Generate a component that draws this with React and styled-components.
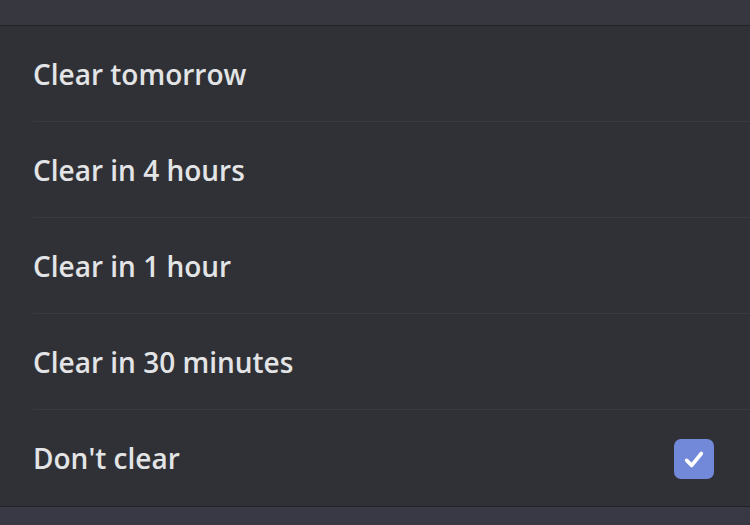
import React from "react";
import styled, { createGlobalStyle } from "styled-components";

const Global = createGlobalStyle`
  html, body { margin: 0; padding: 0; background: #2f3136; }
  body { font-family: "Open Sans", "Noto Sans", sans-serif; }
`;

const Page = styled.div`
  width: 750px;
  height: 525px;
  display: flex;
  flex-direction: column;
  background: #2f3136;
  overflow: hidden;
`;

const TopBar = styled.div`
  height: 25px;
  background: #36373f;
  border-bottom: 1px solid #232428;
  flex: none;
`;

const List = styled.div`
  flex: 1;
  padding-left: 33px;
  display: flex;
  flex-direction: column;
`;

const Row = styled.div`
  height: 95px;
  display: flex;
  align-items: center;
  justify-content: space-between;
  padding-right: 36px;
  border-bottom: ${(p) => (p.$last ? "none" : "1px solid #393b40")};
  flex: none;
`;

const Label = styled.span`
  color: #e3e4e6;
  font-size: 28px;
  font-weight: 600;
  letter-spacing: 0;
  margin-top: 0;
`;

const Check = styled.div`
  width: 40px;
  height: 40px;
  border-radius: 7px;
  background: #7289da;
  display: flex;
  align-items: center;
  justify-content: center;
  margin-top: 2px;
`;

const BottomBar = styled.div`
  height: 18px;
  background: #383945;
  border-top: 1px solid #222327;
  flex: none;
  margin-top: auto;
`;

const items = [
  "Clear tomorrow",
  "Clear in 4 hours",
  "Clear in 1 hour",
  "Clear in 30 minutes",
  "Don't clear",
];

export default function App() {
  return (
    <Page>
      <Global />
      <TopBar />
      <List>
        {items.map((t, i) => (
          <Row key={t} $last={i === items.length - 1}>
            <Label>{t}</Label>
            {i === items.length - 1 && (
              <Check>
                <svg width="22" height="22" viewBox="0 0 24 24">
                  <path
                    d="M4 13.5 L9.5 19 L20 6"
                    fill="none"
                    stroke="#fff"
                    strokeWidth="4"
                    strokeLinecap="round"
                    strokeLinejoin="round"
                  />
                </svg>
              </Check>
            )}
          </Row>
        ))}
      </List>
      <BottomBar />
    </Page>
  );
}
